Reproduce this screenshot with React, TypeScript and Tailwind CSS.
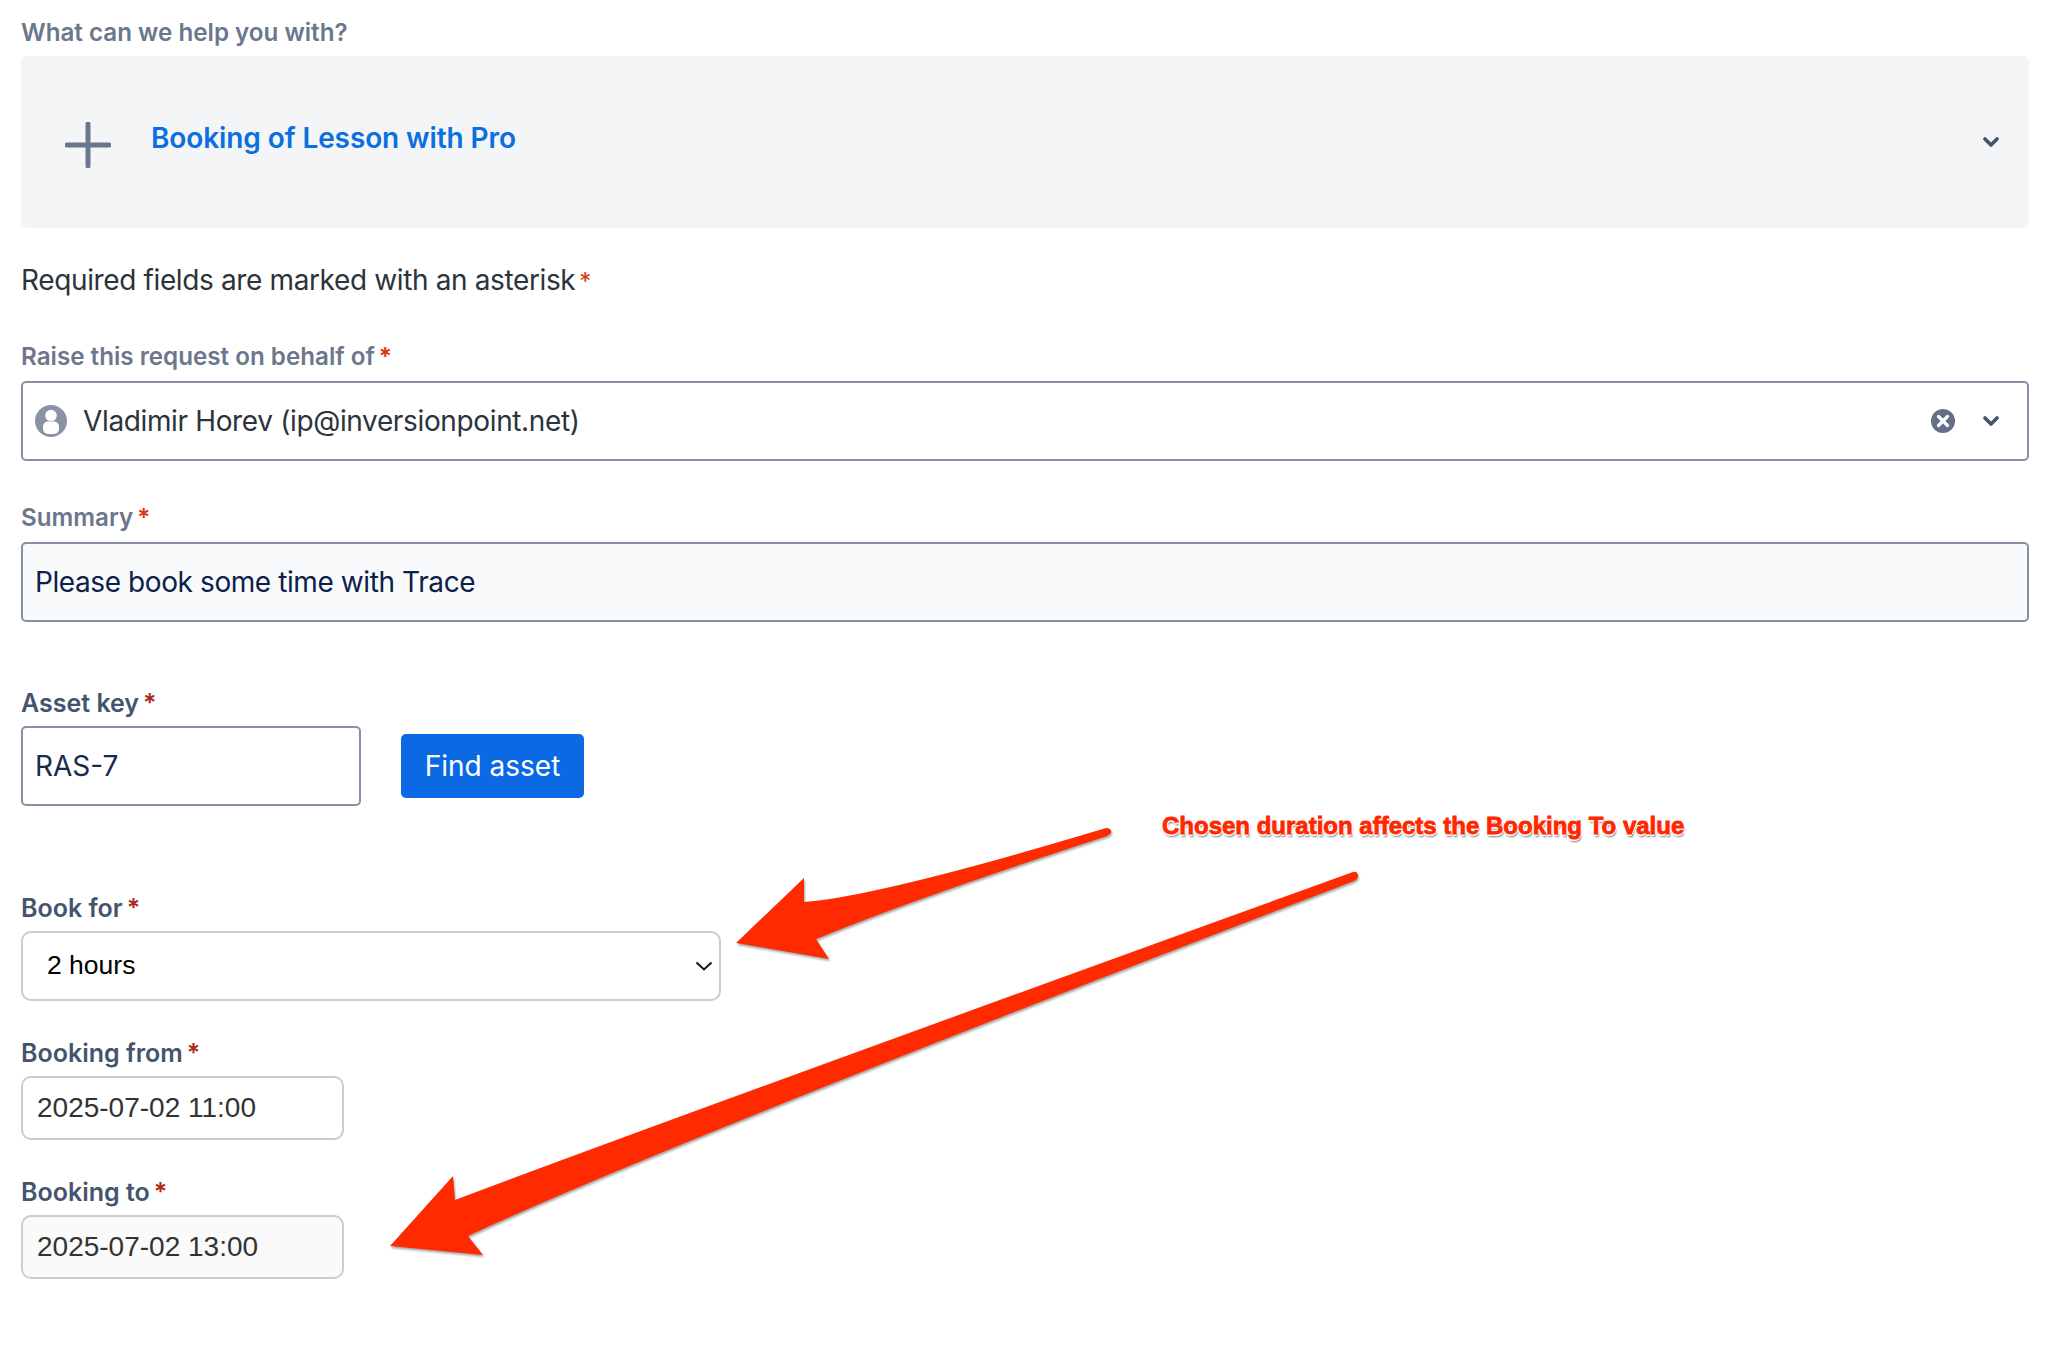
import React from 'react';

const inter = 'font-["Inter","Noto_Sans",sans-serif]';

const Asterisk = ({ dark = false }: { dark?: boolean }) => (
  <span className={`ml-[4px] ${dark ? 'text-[#ae2a19]' : 'text-[#de350b]'}`}>*</span>
);

const Label = ({ text, dark = false, star = true }: { text: string; dark?: boolean; star?: boolean }) => (
  <div className={`h-6 leading-6 font-semibold whitespace-nowrap ${dark ? 'text-[25px] text-[#44546f]' : 'text-[24.2px] text-[#6b778c]'}`}>
    {text}
    {star && <Asterisk dark={dark} />}
  </div>
);

const Chevron = () => (
  <svg width="16" height="10" viewBox="0 0 16 10" fill="none" className="shrink-0">
    <path d="M2 2l6 6 6-6" stroke="#44546f" strokeWidth="3.6" strokeLinecap="round" strokeLinejoin="round" />
  </svg>
);

const ClearIcon = () => (
  <svg width="24" height="24" viewBox="0 0 24 24" className="shrink-0">
    <circle cx="12" cy="12" r="12" fill="#626f86" />
    <path d="M7.5 7.5l9 9M16.5 7.5l-9 9" stroke="#fff" strokeWidth="3.2" strokeLinecap="round" />
  </svg>
);

const Avatar = () => (
  <svg width="32" height="32" viewBox="0 0 32 32" className="shrink-0">
    <circle cx="16" cy="16" r="16" fill="#8993a4" />
    <circle cx="16" cy="10.5" r="5.8" fill="#fff" />
    <rect x="8" y="16.5" width="16" height="12.5" rx="5" fill="#fff" />
  </svg>
);

const Arrows = () => (
  <svg
    width="2054"
    height="1352"
    viewBox="0 0 2054 1352"
    className="absolute left-0 top-0 pointer-events-none drop-shadow-[1px_2px_1px_rgba(0,0,0,0.35)]"
  >
    <path
      d="M736 943L804 878L804 902Q880 896 1106 828Q1112 828 1111 833Q1108 836 1104 837Q910 900 816 939L829 959Z"
      fill="#ff2a00"
    />
    <path
      d="M390 1246L453 1176L455 1200Q640 1130 1353 872Q1358 871 1358 876Q1358 879 1354 881Q650 1150 468 1236L483 1255Z"
      fill="#ff2a00"
    />
  </svg>
);

export default function App() {
  return (
    <div className={`relative min-h-[1352px] bg-white pl-[21px] pr-[25px] pt-[21px] ${inter}`}>
      <Label text="What can we help you with?" star={false} />

      <div className="mt-[11px] flex h-[172px] items-center rounded-[6px] bg-[#f4f5f7] pl-[44px] pr-[30px]">
        <svg width="46" height="46" viewBox="0 0 46 46" fill="none" className="mt-[6px] shrink-0">
          <path d="M23 2v42M2 23h42" stroke="#6b778c" strokeWidth="5" strokeLinecap="round" />
        </svg>
        <div className="ml-[40px] mb-[9px] text-[28px] font-semibold tracking-[-0.1px] text-[#0b6fe0] whitespace-nowrap">Booking of Lesson with Pro</div>
        <div className="ml-auto"><Chevron /></div>
      </div>

      <div className="mt-[36px] h-8 text-[28px] leading-8 tracking-[-0.37px] text-[#2c333a] whitespace-nowrap">
        Required fields are marked with an asterisk
        <span className="ml-1 text-[24px] text-[#de350b]">*</span>
      </div>

      <div className="mt-[49px]"><Label text="Raise this request on behalf of" /></div>
      <div className="mt-3 flex h-20 items-center rounded-[5px] border-2 border-[#8590a2] bg-white pl-3 pr-[28px]">
        <Avatar />
        <span className="ml-[16px] text-[28px] tracking-[-0.36px] text-[#2c333a] whitespace-nowrap">Vladimir Horev (ip@inversionpoint.net)</span>
        <div className="ml-auto flex items-center gap-[28px]">
          <ClearIcon />
          <Chevron />
        </div>
      </div>

      <div className="mt-[45px]"><Label text="Summary" /></div>
      <div className="mt-3 flex h-20 items-center rounded-[5px] border-2 border-[#8590a2] bg-[#f9fafc] pl-3 text-[28px] tracking-[-0.41px] text-[#0b2149] whitespace-nowrap">
        Please book some time with Trace
      </div>

      <div className="mt-[69px]"><Label text="Asset key" dark /></div>
      <div className="mt-[11px] flex items-center gap-[40px]">
        <div className="flex h-20 w-[340px] items-center rounded-[5px] border-2 border-[#8590a2] bg-white pl-3 text-[28px] text-[#172b4d]">
          RAS-7
        </div>
        <div className="flex h-16 w-[183px] items-center justify-center rounded-[5px] bg-[#0b69e4] text-[28px] text-white">
          Find asset
        </div>
      </div>

      <div className="mt-[90px]"><Label text="Book for" dark /></div>
      <div className={`mt-[11px] flex h-[70px] w-[700px] items-center rounded-[10px] border-2 border-[#cccccc] bg-white pl-6 pr-[6px] font-["Liberation_Sans",Arial,sans-serif] text-[26.5px] text-black`}>
        2 hours
        <svg width="18" height="10" viewBox="0 0 18 10" fill="none" className="ml-auto shrink-0">
          <path d="M1.5 1.5L9 8.5l7.5-7" stroke="#111" strokeWidth="2" />
        </svg>
      </div>

      <div className="mt-[40px]"><Label text="Booking from" dark /></div>
      <div className={`mt-[11px] flex h-16 w-[323px] items-center rounded-[10px] border-2 border-[#cccccc] bg-white pl-[14px] font-["Liberation_Sans",Arial,sans-serif] text-[28px] text-[#333333]`}>
        2025-07-02 11:00
      </div>

      <div className="mt-[40px]"><Label text="Booking to" dark /></div>
      <div className={`mt-[11px] flex h-16 w-[323px] items-center rounded-[10px] border-2 border-[#cccccc] bg-[#fafafa] pl-[14px] font-["Liberation_Sans",Arial,sans-serif] text-[28px] text-[#333333]`}>
        2025-07-02 13:00
      </div>

      <Arrows />
      <span className={`absolute left-[1162px] top-[812px] font-["Liberation_Sans",Arial,sans-serif] text-[24px] leading-7 font-bold text-[#ff2600] whitespace-nowrap [-webkit-text-stroke:0.8px_#ff2600] [text-shadow:1.5px_0_0_#fff,-1.5px_0_0_#fff,0_1.5px_0_#fff,0_-1.5px_0_#fff,1px_2.5px_2px_rgba(0,0,0,0.5)]`}>
        Chosen duration affects the Booking To value
      </span>
    </div>
  );
}
